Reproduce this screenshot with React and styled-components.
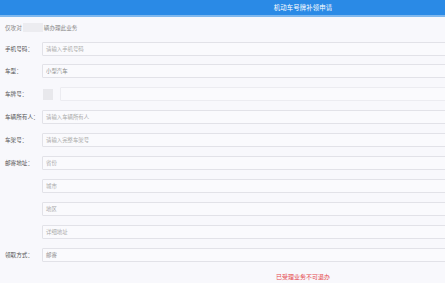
import React from 'react'
import styled, { createGlobalStyle } from 'styled-components'

const Global = createGlobalStyle`
html, body {
  margin: 0;
  padding: 0;
  overflow: hidden;
  background: #f8f8fc;
}
body {
  font-family: "Noto Sans CJK SC", "Noto Sans", sans-serif;
}
`;

const Page = styled.div`
width: 606px;
min-height: 283px;
background: #f8f8fc;
`;

const Header = styled.div`
height: 15px;
background: #2a8ae6;
border-bottom: 2px solid #7fb8ee;
display: flex;
align-items: center;
justify-content: center;
color: #fff;
font-size: 6.4px;
letter-spacing: 0.1px;
`;

const Notice = styled.div`
display: flex;
align-items: center;
height: 21px;
padding-left: 5px;
color: #888;
font-size: 5.6px;
`;

const Blur = styled.span`
display: inline-block;
width: 20px;
height: 9px;
background: #ececf0;
margin: 0 1px;
`;

const Form = styled.div`
display: flex;
flex-direction: column;
gap: 7.9px;
margin-top: 3px;
`;

const Row = styled.div`
display: flex;
align-items: center;
height: 15px;
`;

const Label = styled.div`
width: 37px;
padding-left: 5px;
flex-shrink: 0;
color: #555;
font-size: 5.6px;
white-space: nowrap;
`;

const Field = styled.div`
flex: 1;
height: 14px;
box-sizing: border-box;
border: 1px solid ${p => (p.$faint ? '#ececf1' : '#e2e2e8')};
border-radius: 1px;
background: #fafafd;
display: flex;
align-items: center;
padding-left: 3px;
color: ${p => (p.$value ? '#8a8a8a' : '#aaa')};
font-size: 5.4px;
margin-left: ${p => p.$offset || 0}px;
`;

const PlateBox = styled.div`
width: 10px;
height: 11px;
background: #e8e8ec;
flex-shrink: 0;
margin-left: 1px;
`;

const Warning = styled.div`
text-align: center;
color: #e5484d;
font-size: 6px;
margin-top: 10px;
`;

const rows = [
  { label: '手机号码：', text: '请输入手机号码' },
  { label: '车型：', text: '小型汽车', value: true },
  { label: '车牌号：', plate: true },
  { label: '车辆所有人：', text: '请输入车辆所有人' },
  { label: '车架号：', text: '请输入完整车架号' },
  { label: '邮寄地址：', text: '省份' },
  { label: '', text: '城市' },
  { label: '', text: '地区' },
  { label: '', text: '详细地址' },
  { label: '领取方式：', text: '邮寄', value: true },
]

export default function App() {
  return <Page>
    <Global />
    <Header>机动车号牌补领申请</Header>
    <Notice>仅攻对<Blur />辆办理此业务</Notice>
    <Form>
      {rows.map((r, i) => (
        <Row key={i}>
          <Label>{r.label}</Label>
          {r.plate ? <>
            <PlateBox />
            <Field $offset={7} $faint />
          </> : <Field $value={r.value}>{r.text}</Field>}
        </Row>
      ))}
    </Form>
    <Warning>已受理业务不可退办</Warning>
  </Page>
}
